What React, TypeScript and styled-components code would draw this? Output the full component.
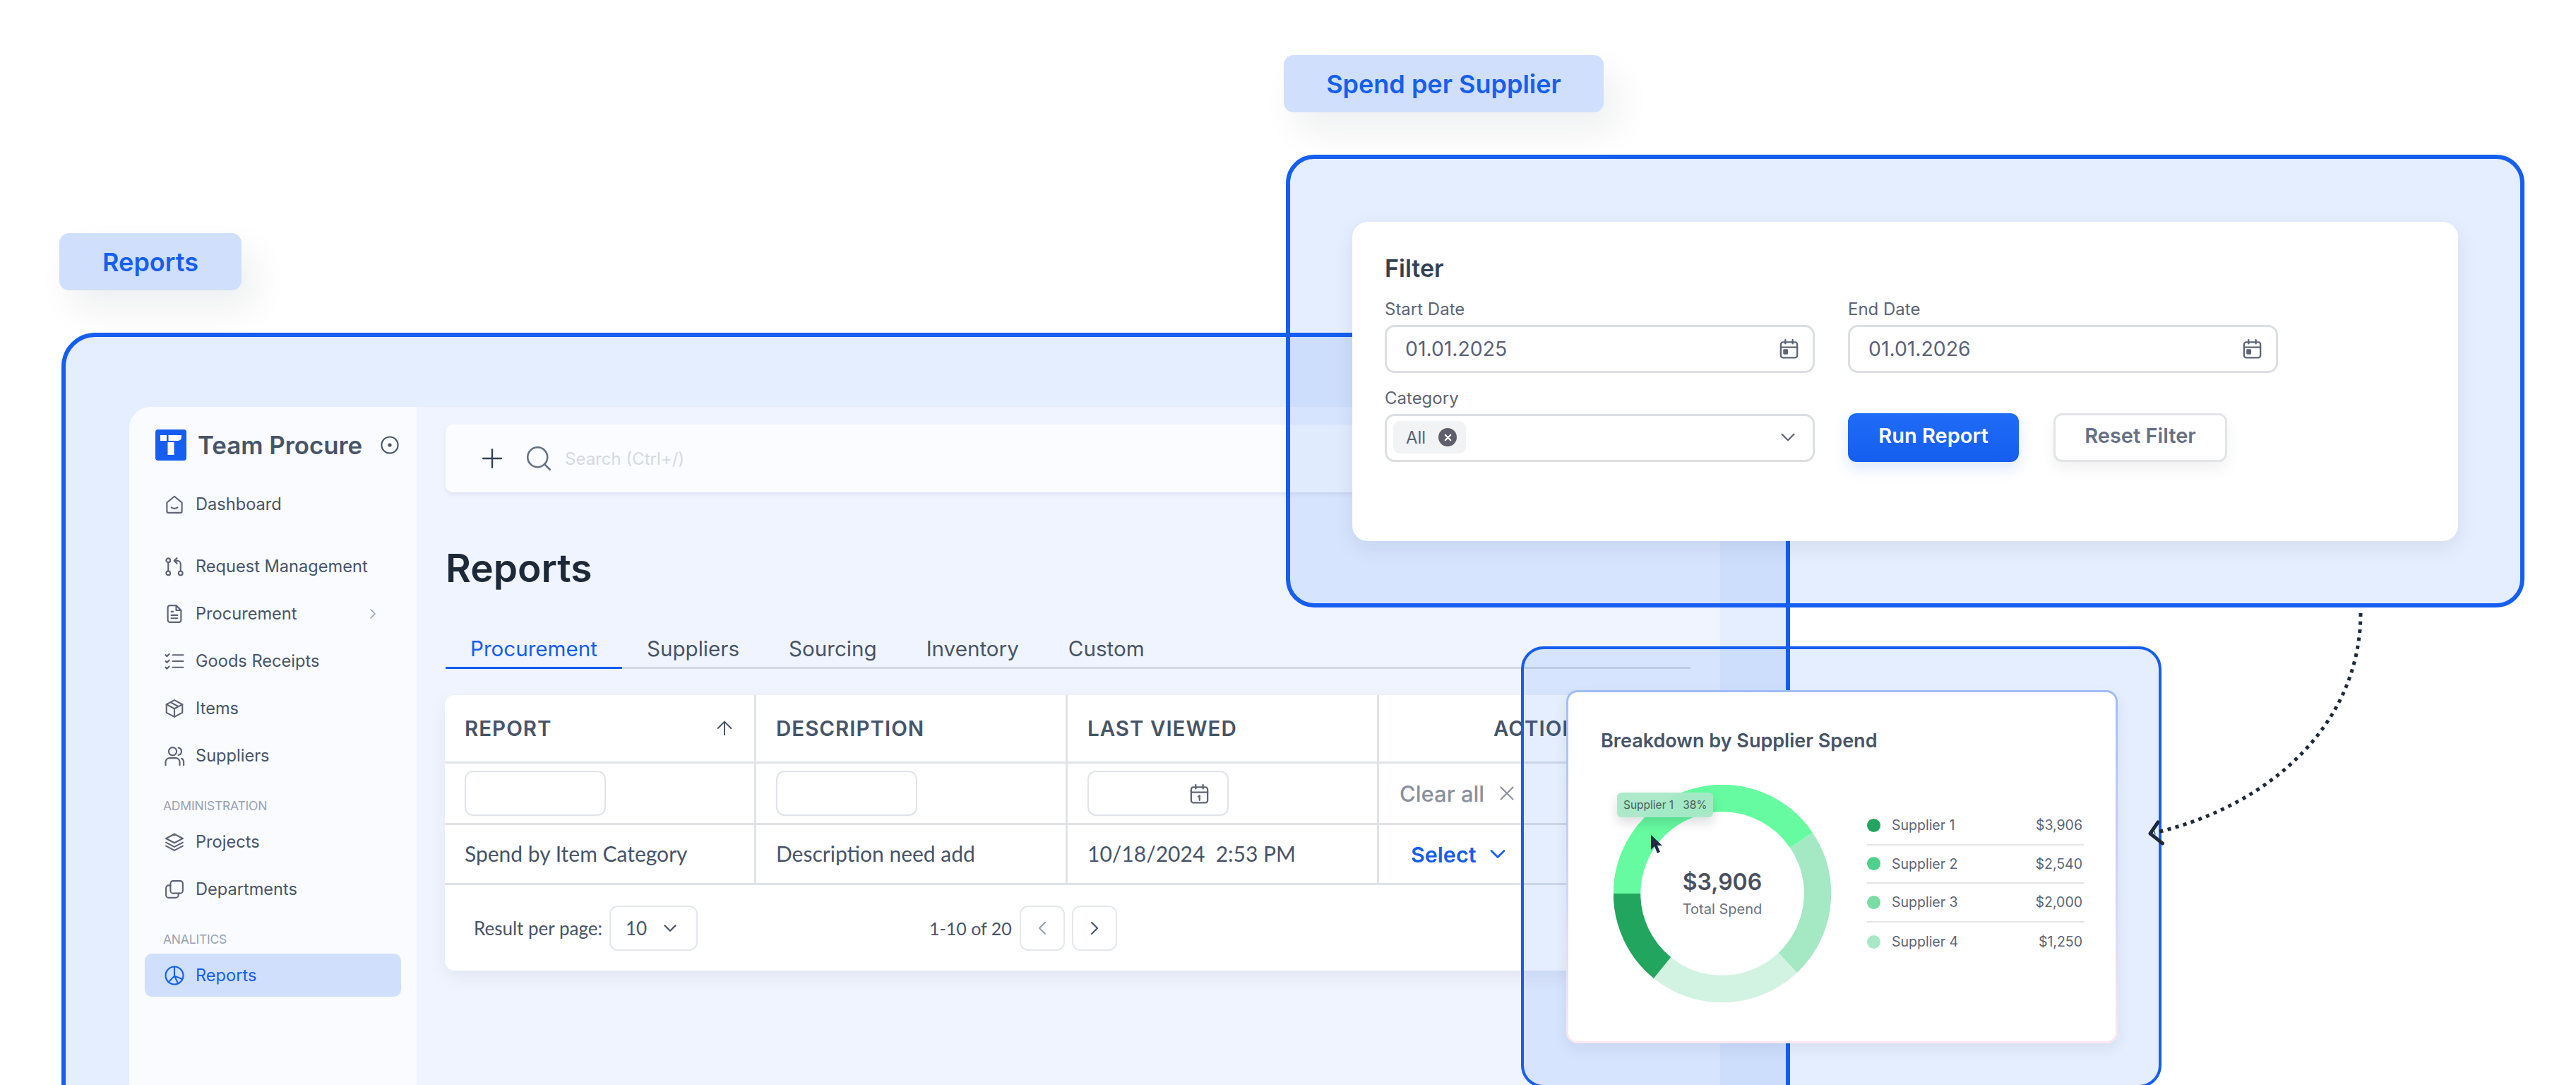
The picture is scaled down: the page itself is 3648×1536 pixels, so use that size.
import styled, { createGlobalStyle } from 'styled-components';
import { ArrowUp, ChevronDown, ChevronLeft, ChevronRight, Plus, Search, X } from 'lucide-react';

const GlobalStyle = createGlobalStyle`
  html, body {
    margin: 0;
    padding: 0;
    background: #fff;
  }
  * {
    box-sizing: border-box;
  }
`;

const Canvas = styled.div`
  position: relative;
  width: 3648px;
  height: 1536px;
  overflow: hidden;
  background: #fff;
  font-family: Inter, 'Liberation Sans', sans-serif;
  color: #475467;
`;

const Tag = styled.div<{ $left: number; $top: number; $width: number; $height: number }>`
  position: absolute;
  left: ${p => p.$left}px;
  top: ${p => p.$top}px;
  width: ${p => p.$width}px;
  height: ${p => p.$height}px;
  display: flex;
  align-items: center;
  justify-content: center;
  border-radius: 14px;
  background: #d0dffc;
  color: #155eef;
  font-size: 36px;
  font-weight: 600;
  box-shadow: 18px 26px 50px rgba(16, 24, 40, 0.07);
`;

const Frame = styled.section<{ $left: number; $top: number; $width: number; $height: number; $radius: number; $line: number }>`
  position: absolute;
  left: ${p => p.$left}px;
  top: ${p => p.$top}px;
  width: ${p => p.$width}px;
  height: ${p => p.$height}px;
  border: ${p => p.$line}px solid #155eef;
  border-radius: ${p => p.$radius}px;
  background: rgba(21, 100, 245, 0.11);
`;

const AppWindow = styled.div`
  display: flex;
  margin: 99px 93px 0 90px;
  height: 1100px;
  border-radius: 30px 0 0 0;
  overflow: hidden;
`;

const Sidebar = styled.aside`
  width: 407px;
  flex: none;
  padding: 32px 22px 0;
  background: #f9fbff;
`;

const Brand = styled.div`
  display: flex;
  align-items: center;
  height: 43px;
  padding-left: 15px;
`;

const BrandName = styled.span`
  margin-left: 16px;
  font-size: 34.8px;
  font-weight: 600;
  color: #475467;
  white-space: nowrap;
`;

const BrandMark = styled.svg`
  width: 26px;
  height: 26px;
  margin-left: 26px;
  flex: none;
`;

const Logo = styled.svg`
  width: 44px;
  height: 44px;
  flex: none;
`;

const NavGroup = styled.nav<{ $gap: number }>`
  display: flex;
  flex-direction: column;
  margin-top: ${p => p.$gap}px;
`;

const NavItem = styled.a<{ $active?: boolean }>`
  display: flex;
  align-items: center;
  gap: 15px;
  width: 363px;
  height: ${p => (p.$active ? 61 : 67)}px;
  padding: 0 28px 0 27px;
  border-radius: 10px;
  font-size: 23.6px;
  color: ${p => (p.$active ? '#155eef' : '#475467')};
  background: ${p => (p.$active ? '#d0dffc' : 'transparent')};
`;

const NavChevron = styled.span`
  display: flex;
  margin-left: auto;
  color: #98a2b3;
`;

const SectionLabel = styled.div<{ $gap: number; $after: number }>`
  margin: ${p => p.$gap}px 0 ${p => p.$after}px 26px;
  font-size: 17.5px;
  line-height: 22px;
  letter-spacing: -0.2px;
  color: #98a2b3;
`;

const NavIcon = styled.svg`
  width: 30px;
  height: 30px;
  flex: none;
  fill: none;
  stroke: currentColor;
  stroke-width: 1.7;
  stroke-linecap: round;
  stroke-linejoin: round;
  color: #5d6475;
`;

const ActiveIcon = styled(NavIcon)`
  color: #155eef;
`;

const DateGlyph = styled(NavIcon)`
  width: 31px;
  height: 31px;
  stroke-width: 1.8;
`;

const Main = styled.main`
  flex: 1;
  padding: 25px 42px 0 41px;
  background: #f0f4ff;
`;

const Toolbar = styled.div`
  display: flex;
  align-items: center;
  height: 96px;
  padding-left: 44px;
  border-radius: 10px;
  background: #fbfcff;
  box-shadow: 0 3px 6px rgba(16, 24, 40, 0.08);
`;

const SearchHint = styled.span`
  margin-left: 16px;
  font-size: 24px;
  color: #d5d9e0;
`;

const ToolPlus = styled(Plus)`
  flex: none;
  color: #344054;
`;

const ToolSearch = styled(Search)`
  flex: none;
  margin-left: 23px;
  color: #667085;
`;

const PageTitle = styled.h1`
  margin: 73px 0 1px;
  font-size: 55px;
  line-height: 68px;
  font-weight: 600;
  color: #1d2939;
`;

const Tabs = styled.div`
  display: flex;
  margin-top: 63px;
  border-bottom: 3px solid #d3d8e2;
`;

const Tab = styled.div<{ $active?: boolean }>`
  margin-bottom: -3px;
  padding: 0 35px 8px;
  border-bottom: 3px solid ${p => (p.$active ? '#155eef' : 'transparent')};
  font-size: 29.6px;
  line-height: 35px;
  color: ${p => (p.$active ? '#155eef' : '#475467')};
`;

const TableCard = styled.div`
  margin-top: 37px;
  margin-left: -1px;
  height: 390px;
  border-radius: 14px;
  background: #fff;
  box-shadow: 0 10px 26px rgba(16, 24, 40, 0.06);
`;

const Grid = styled.div`
  display: grid;
  grid-template-columns: 441px 441px 441px 1fr;
  grid-template-rows: 97px 87px 85px;
`;

const Cell = styled.div<{ $last?: boolean }>`
  display: flex;
  align-items: center;
  padding: 0 26px 0 28px;
  border-right: ${p => (p.$last ? 'none' : '3px solid #e0e3e8')};
  border-bottom: 3px solid #e0e3e8;
`;

const HeadCell = styled(Cell)`
  justify-content: space-between;
  font-size: 29.5px;
  font-weight: 600;
  letter-spacing: 1px;
  color: #475467;
`;

const ActionHead = styled(HeadCell)`
  justify-content: flex-start;
  padding-left: 162px;
`;

const BodyCell = styled(Cell)`
  padding-bottom: 2px;
  font-family: Lato, Inter, sans-serif;
  font-size: 30px;
  color: #475467;
  white-space: pre;
`;

const ClearCell = styled(Cell)`
  gap: 15px;
  padding-left: 29px;
`;

const SelectCell = styled(Cell)`
  gap: 13px;
  padding-left: 45px;
`;

const FilterBox = styled.div`
  display: flex;
  align-items: center;
  justify-content: flex-end;
  width: 200px;
  height: 64px;
  padding-right: 24px;
  border: 2px solid #e0e3e8;
  border-radius: 12px;
`;

const ClearText = styled.span`
  font-size: 31px;
  font-weight: 500;
  color: #8a909c;
`;

const ClearIcon = styled(X)`
  color: #8a909c;
`;

const SelectText = styled.span`
  font-size: 30.5px;
  font-weight: 600;
  color: #155eef;
`;

const SelectIcon = styled(ChevronDown)`
  color: #155eef;
`;

const Pager = styled.div`
  display: flex;
  align-items: center;
  height: 121px;
  padding: 0 0 0 41px;
  font-family: Lato, Inter, sans-serif;
  font-size: 26px;
  color: #475467;
`;

const PageSize = styled.div`
  display: flex;
  align-items: center;
  justify-content: space-between;
  width: 125px;
  height: 64px;
  margin-left: 10px;
  padding: 0 22px 0 21px;
  border: 2px solid #e4e7ec;
  border-radius: 12px;
  font-size: 26px;
`;

const PageRange = styled.span`
  width: 128px;
  margin-left: 328px;
  font-size: 25px;
`;

const PageButton = styled.button<{ $gap: number; $dim?: boolean }>`
  display: flex;
  align-items: center;
  justify-content: center;
  width: 64px;
  height: 64px;
  margin-left: ${p => p.$gap}px;
  padding: 0;
  border: 2px solid #e4e7ec;
  border-radius: 12px;
  background: #fff;
  color: ${p => (p.$dim ? '#98a2b3' : '#475467')};
`;

const FilterCard = styled.div`
  width: 1566px;
  height: 452px;
  margin: 89px 0 0 88px;
  padding: 44px 47px 0 46px;
  border-radius: 22px;
  background: #fff;
  box-shadow: 0 10px 30px rgba(16, 24, 40, 0.08);
`;

const FilterTitle = styled.h2`
  margin: 0;
  font-size: 34px;
  line-height: 44px;
  font-weight: 600;
  color: #344054;
`;

const FilterGrid = styled.div`
  display: grid;
  grid-template-columns: 609px 609px;
  column-gap: 47px;
  row-gap: 21px;
  margin-top: 21px;
`;

const Field = styled.div`
  display: flex;
  flex-direction: column;
  justify-content: flex-end;
`;

const FieldLabel = styled.label`
  margin-bottom: 7px;
  font-size: 24px;
  line-height: 30px;
  color: #5d6475;
`;

const InputBox = styled.div`
  display: flex;
  align-items: center;
  justify-content: space-between;
  height: 68px;
  padding: 0 18px 2px 26px;
  border: 3px solid #dcdee2;
  border-radius: 14px;
  font-size: 28.4px;
  color: #5b6178;
`;

const SelectBox = styled(InputBox)`
  padding: 0 18px 2px 9px;
`;

const Chip = styled.span`
  display: flex;
  align-items: center;
  gap: 18px;
  width: 103px;
  height: 46px;
  padding-left: 18px;
  border-radius: 9px;
  background: #f2f3f5;
  font-size: 24px;
`;

const ChipClear = styled.span`
  display: flex;
  align-items: center;
  justify-content: center;
  width: 26px;
  height: 26px;
  border-radius: 50%;
  background: #5e5f6b;
  color: #fff;
`;

const MutedChevron = styled(ChevronDown)`
  color: #5d6475;
`;

const ButtonRow = styled.div`
  display: flex;
  align-items: flex-end;
  gap: 49px;
`;

const RunButton = styled.button`
  width: 242px;
  height: 69px;
  padding: 0 0 7px;
  border: none;
  border-radius: 12px;
  background: linear-gradient(#1f6cf7, #155eef);
  box-shadow: 0 10px 20px rgba(21, 94, 239, 0.14);
  color: #fff;
  font: 600 29px Inter, sans-serif;
`;

const ResetButton = styled.button`
  width: 246px;
  height: 69px;
  padding: 0 0 7px;
  border: 3px solid #e2e4e8;
  border-radius: 12px;
  background: #fff;
  box-shadow: 0 10px 20px rgba(16, 24, 40, 0.06);
  color: #667085;
  font: 600 29px Inter, sans-serif;
`;

const ChartCard = styled.div`
  width: 781px;
  height: 500px;
  margin: 58px 0 0 60px;
  padding: 51px 0 0 46px;
  border: 3px solid transparent;
  border-radius: 16px;
  background: linear-gradient(#fff, #fff) padding-box, linear-gradient(#a0bbf8, #fde8f0) border-box;
  box-shadow: 0 8px 20px rgba(16, 24, 40, 0.07);
`;

const ChartTitle = styled.h3`
  margin: 0;
  font-size: 27px;
  line-height: 36px;
  font-weight: 600;
  color: #475467;
`;

const ChartBody = styled.div`
  display: flex;
  align-items: flex-start;
  gap: 51px;
  margin: 44px 0 0 18px;
`;

const Donut = styled.div`
  position: relative;
  width: 308px;
  height: 308px;
  flex: none;
`;

const DonutCenter = styled.div`
  position: absolute;
  inset: 0;
  display: flex;
  flex-direction: column;
  align-items: center;
  justify-content: center;
  gap: 4px;
  padding-bottom: 2px;
`;

const DonutValue = styled.span`
  font-size: 32px;
  line-height: 42px;
  font-weight: 600;
  color: #4b4f5e;
`;

const DonutLabel = styled.span`
  font-size: 20px;
  line-height: 26px;
  color: #6b7280;
`;

const Tooltip = styled.div`
  position: absolute;
  left: 5px;
  top: 11px;
  display: flex;
  align-items: center;
  gap: 13px;
  width: 136px;
  height: 35px;
  padding-left: 9px;
  border-radius: 6px;
  background: rgba(168, 232, 199, 0.95);
  box-shadow: 0 8px 16px rgba(16, 24, 40, 0.14);
  font-size: 15.5px;
  color: #4b6058;
  white-space: nowrap;
`;

const CursorMark = styled.svg`
  position: absolute;
  left: 52px;
  top: 71px;
  width: 18px;
  height: 28px;
`;

const Legend = styled.ul`
  width: 307px;
  margin: 31px 0 0;
  padding: 0;
  list-style: none;
`;

const LegendRow = styled.li<{ $plain?: boolean }>`
  display: flex;
  align-items: center;
  gap: 16px;
  height: 54.6px;
  border-bottom: ${p => (p.$plain ? 'none' : '2px solid #e4e4e7')};
  font-size: 19.5px;
  color: #5d6475;
`;

const LegendDot = styled.span<{ $color: string }>`
  width: 19px;
  height: 19px;
  border-radius: 50%;
  background: ${p => p.$color};
`;

const LegendValue = styled.span`
  margin-left: auto;
  padding-right: 2px;
`;

const FlowArrow = styled.svg`
  position: absolute;
  left: 3040px;
  top: 860px;
  width: 320px;
  height: 350px;
  fill: none;
`;

const DateIcon = ({ day }: { day?: boolean }) => (
  <DateGlyph viewBox="0 0 24 24">
    <rect x="3" y="5" width="18" height="17" rx="2.5" />
    <path d="M3 10.5h18M8 2.5v4M16 2.5v4" />
    {day ? <path d="M10.8 15.2l1.4-1v5" /> : <rect x="6.5" y="13.5" width="3.5" height="4" fill="currentColor" />}
  </DateGlyph>
);

const slices = [
  { color: '#66fba0', start: 180, sweep: 146 },
  { color: '#a5e8c4', start: 326, sweep: 80.6 },
  { color: '#d3f3e2', start: 46.6, sweep: 82.4 },
  { color: '#22a55f', start: 129, sweep: 51 },
];

const suppliers = [
  { name: 'Supplier 1', value: '$3,906', color: '#22a55f' },
  { name: 'Supplier 2', value: '$2,540', color: '#4fd18b' },
  { name: 'Supplier 3', value: '$2,000', color: '#7bdca6' },
  { name: 'Supplier 4', value: '$1,250', color: '#a8e8c7' },
];

export default function App() {
  return (
    <>
      <GlobalStyle />
      <Canvas>
        <Tag $left={84} $top={330} $width={258} $height={81}>Reports</Tag>
        <Tag $left={1818} $top={78} $width={453} $height={81}>Spend per Supplier</Tag>

        <Frame $left={87} $top={471} $width={2448} $height={1300} $radius={48} $line={6}>
          <AppWindow>
            <Sidebar>
              <Brand>
                <Logo viewBox="0 0 44 44">
                  <rect width="44" height="44" rx="4" fill="#155eef" />
                  <rect x="7" y="8" width="9" height="8" fill="#fff" />
                  <path d="M18.5 8H37v3a5 5 0 0 1-5 5H18.5z" fill="#fff" />
                  <rect x="17.5" y="18" width="9" height="18" fill="#fff" />
                </Logo>
                <BrandName>Team Procure</BrandName>
                <BrandMark viewBox="0 0 26 26">
                  <circle cx="13" cy="13" r="11.6" fill="none" stroke="#475467" strokeWidth="2" />
                  <circle cx="13" cy="13" r="2.6" fill="#475467" />
                </BrandMark>
              </Brand>

              <NavGroup $gap={29}>
                <NavItem>
                  <NavIcon viewBox="0 0 24 24">
                    <path d="M3.5 10L12 3l8.5 7v10a1.5 1.5 0 0 1-1.5 1.5H5A1.5 1.5 0 0 1 3.5 20z" />
                    <path d="M8.5 15.5c2 1.3 5 1.3 7 0" />
                  </NavIcon>
                  Dashboard
                </NavItem>
              </NavGroup>

              <NavGroup $gap={21}>
                <NavItem>
                  <NavIcon viewBox="0 0 24 24">
                    <circle cx="5" cy="5" r="2.3" />
                    <circle cx="5" cy="19.5" r="2.3" />
                    <circle cx="19" cy="19.5" r="2.3" />
                    <path d="M5 7.3v9.9M19 17.2V9a3.5 3.5 0 0 0-3.5-3.5H12M14.8 2.5l-3 3 3 3" />
                  </NavIcon>
                  Request Management
                </NavItem>
                <NavItem>
                  <NavIcon viewBox="0 0 24 24">
                    <path d="M14 2.5H7A2.500 2.500 0 0 0 4.500 5v14A2.500 2.500 0 0 0 7 21.500h10a2.500 2.500 0 0 0 2.500-2.500V8z" />
                    <path d="M14 2.500V8h5.500M8.500 9.500h2M8.500 13.500h7M8.500 17h7" />
                  </NavIcon>
                  Procurement
                  <NavChevron><ChevronRight size={24} strokeWidth={1.7} /></NavChevron>
                </NavItem>
                <NavItem>
                  <NavIcon viewBox="0 0 24 24">
                    <path d="M2 5l1.500 1.500L6 4M2 12l1.500 1.500L6 11M2 19l1.500 1.500L6 18M10 5h12M10 12h12M10 19h12" />
                  </NavIcon>
                  Goods Receipts
                </NavItem>
                <NavItem>
                  <NavIcon viewBox="0 0 24 24">
                    <path d="M12 2.500l9 4.800v9.400l-9 4.800-9-4.800V7.300z" />
                    <path d="M3 7.300l9 4.900 9-4.900M12 12.200v9.300M7.500 4.900l9 4.900" />
                  </NavIcon>
                  Items
                </NavItem>
                <NavItem>
                  <NavIcon viewBox="0 0 24 24">
                    <circle cx="10" cy="7" r="4.500" />
                    <path d="M16.500 2.800c2.200.6 3.500 2.200 3.500 4.200s-1.300 3.600-3.500 4.200M2 22.500V19a4.500 4.500 0 0 1 4.500-4.500h7A4.500 4.500 0 0 1 18 19v3.500M20 15c1.500.7 2.500 2.200 2.500 4v3.500" />
                  </NavIcon>
                  Suppliers
                </NavItem>
              </NavGroup>

              <SectionLabel $gap={27} $after={6}>ADMINISTRATION</SectionLabel>
              <NavGroup $gap={0}>
                <NavItem>
                  <NavIcon viewBox="0 0 24 24">
                    <path d="M12 3l9.500 5-9.500 5-9.500-5zM2.500 12.500l9.500 5 9.500-5M2.500 16.500l9.500 5 9.500-5" />
                  </NavIcon>
                  Projects
                </NavItem>
                <NavItem>
                  <NavIcon viewBox="0 0 24 24">
                    <rect x="7.500" y="2.500" width="14" height="14" rx="3" />
                    <path d="M7.500 7.500H5.500a3 3 0 0 0-3 3v8a3 3 0 0 0 3 3h8a3 3 0 0 0 3-3v-2" />
                  </NavIcon>
                  Departments
                </NavItem>
              </NavGroup>

              <SectionLabel $gap={27} $after={9}>ANALITICS</SectionLabel>
              <NavItem $active>
                <ActiveIcon viewBox="0 0 24 24">
                  <circle cx="12" cy="12" r="10" />
                  <path d="M12 2v10.500l8.800 3.500M12 12.500l-6.800 7M12 12.500l4.200 8.500" />
                </ActiveIcon>
                Reports
              </NavItem>
            </Sidebar>

            <Main>
              <Toolbar>
                <ToolPlus size={44} strokeWidth={1.3} />
                <ToolSearch size={42} strokeWidth={1.5} />
                <SearchHint>Search (Ctrl+/)</SearchHint>
              </Toolbar>

              <PageTitle>Reports</PageTitle>

              <Tabs>
                <Tab $active>Procurement</Tab>
                <Tab>Suppliers</Tab>
                <Tab>Sourcing</Tab>
                <Tab>Inventory</Tab>
                <Tab>Custom</Tab>
              </Tabs>

              <TableCard>
                <Grid>
                  <HeadCell>REPORT<ArrowUp size={32} strokeWidth={1.5} /></HeadCell>
                  <HeadCell>DESCRIPTION</HeadCell>
                  <HeadCell>LAST VIEWED</HeadCell>
                  <ActionHead $last>ACTIONS</ActionHead>

                  <Cell><FilterBox /></Cell>
                  <Cell><FilterBox /></Cell>
                  <Cell><FilterBox><DateIcon day /></FilterBox></Cell>
                  <ClearCell $last>
                    <ClearText>Clear all</ClearText>
                    <ClearIcon size={34} strokeWidth={1.5} />
                  </ClearCell>

                  <BodyCell>Spend by Item Category</BodyCell>
                  <BodyCell>Description need add</BodyCell>
                  <BodyCell>10/18/2024  2:53 PM</BodyCell>
                  <SelectCell $last>
                    <SelectText>Select</SelectText>
                    <SelectIcon size={36} strokeWidth={1.8} />
                  </SelectCell>
                </Grid>
                <Pager>
                  Result per page:
                  <PageSize>10<ChevronDown size={30} strokeWidth={1.8} /></PageSize>
                  <PageRange>1-10 of 20</PageRange>
                  <PageButton $gap={0} $dim><ChevronLeft size={32} strokeWidth={1.6} /></PageButton>
                  <PageButton $gap={10}><ChevronRight size={32} strokeWidth={1.6} /></PageButton>
                </Pager>
              </TableCard>
            </Main>
          </AppWindow>
        </Frame>

        <Frame $left={1821} $top={219} $width={1754} $height={641} $radius={40} $line={6}>
          <FilterCard>
            <FilterTitle>Filter</FilterTitle>
            <FilterGrid>
              <Field>
                <FieldLabel>Start Date</FieldLabel>
                <InputBox>01.01.2025<DateIcon /></InputBox>
              </Field>
              <Field>
                <FieldLabel>End Date</FieldLabel>
                <InputBox>01.01.2026<DateIcon /></InputBox>
              </Field>
              <Field>
                <FieldLabel>Category</FieldLabel>
                <SelectBox>
                  <Chip>All<ChipClear><X size={15} strokeWidth={3.4} /></ChipClear></Chip>
                  <MutedChevron size={34} strokeWidth={1.6} />
                </SelectBox>
              </Field>
              <ButtonRow>
                <RunButton>Run Report</RunButton>
                <ResetButton>Reset Filter</ResetButton>
              </ButtonRow>
            </FilterGrid>
          </FilterCard>
        </Frame>

        <Frame $left={2154} $top={915} $width={907} $height={625} $radius={32} $line={4}>
          <ChartCard>
            <ChartTitle>Breakdown by Supplier Spend</ChartTitle>
            <ChartBody>
              <Donut>
                <svg width="308" height="308" viewBox="0 0 308 308" fill="none">
                  {slices.map(s => (
                    <circle
                      key={s.color}
                      cx="154"
                      cy="154"
                      r="135"
                      stroke={s.color}
                      strokeWidth="38.500"
                      pathLength={360}
                      strokeDasharray={`${s.sweep} ${360 - s.sweep}`}
                      strokeDashoffset={-s.start}
                    />
                  ))}
                </svg>
                <DonutCenter>
                  <DonutValue>$3,906</DonutValue>
                  <DonutLabel>Total Spend</DonutLabel>
                </DonutCenter>
                <Tooltip><span>Supplier 1</span><span>38%</span></Tooltip>
                <CursorMark viewBox="0 0 18 28">
                  <path d="M1 0v21l5-5 4 10 4-2-4-9h7z" fill="#1f2a44" />
                </CursorMark>
              </Donut>
              <Legend>
                {suppliers.map((s, index) => (
                  <LegendRow key={s.name} $plain={index === suppliers.length - 1}>
                    <LegendDot $color={s.color} />
                    {s.name}
                    <LegendValue>{s.value}</LegendValue>
                  </LegendRow>
                ))}
              </Legend>
            </ChartBody>
          </ChartCard>
        </Frame>

        <FlowArrow viewBox="0 0 320 350">
          <path d="M303 8C303 160 180 280 11 319" stroke="#1d2939" strokeWidth="5" strokeDasharray="5 6.5" />
          <path d="M16 304L5 320l17.500 14" stroke="#1d2939" strokeWidth="5" strokeLinecap="round" strokeLinejoin="round" />
        </FlowArrow>
      </Canvas>
    </>
  );
}
